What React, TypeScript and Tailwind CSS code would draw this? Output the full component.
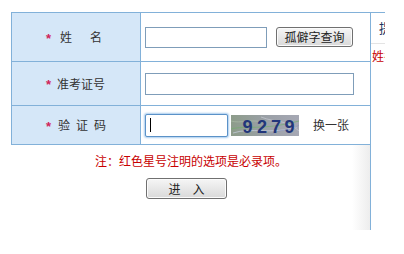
import React from 'react';

const FONT = "font-['SimSun','Noto_Sans_CJK_SC','Liberation_Sans',sans-serif]";

function Star() {
  return (
    <span className="w-[6px] text-[13px] leading-none font-bold text-[#d0245a] font-['Liberation_Sans',sans-serif] translate-y-[1px]">
      *
    </span>
  );
}

function Captcha() {
  return (
    <svg width="68" height="21" viewBox="0 0 68 21" className="block">
      <defs>
        <linearGradient id="cg" x1="0" y1="0" x2="1" y2="0">
          <stop offset="0" stopColor="#8d9c8a" />
          <stop offset="0.5" stopColor="#9aa0a6" />
          <stop offset="1" stopColor="#a6a8b4" />
        </linearGradient>
      </defs>
      <rect width="68" height="21" fill="url(#cg)" />
      <path d="M0 14 C 15 10, 30 16, 68 6" stroke="#6fae6a" strokeWidth="0.8" fill="none" opacity="0.8" />
      <path d="M2 18 C 20 12, 40 20, 66 12" stroke="#c8d0e0" strokeWidth="0.8" fill="none" opacity="0.9" />
      <path d="M30 2 C 45 8, 55 4, 68 16" stroke="#d0d4dc" strokeWidth="0.7" fill="none" opacity="0.8" />
      <path d="M0 6 C 10 9, 20 3, 34 8" stroke="#b8c8b0" strokeWidth="0.6" fill="none" opacity="0.8" />
      <path d="M40 20 C 50 12, 58 18, 68 10" stroke="#8890b8" strokeWidth="0.6" fill="none" />
      <g fill="#22367a" fontFamily="Liberation Sans, Arial, sans-serif" fontWeight="bold" fontSize="18">
        <text x="11.5" y="17.5">9</text>
        <text x="26" y="17.5">2</text>
        <text x="40" y="17.5">7</text>
        <text x="53.5" y="17.5">9</text>
      </g>
    </svg>
  );
}

function Button({ children, className }: { children: React.ReactNode; className: string }) {
  return (
    <button
      type="button"
      className={`flex items-center justify-center border border-[#707070] rounded-[3px] bg-linear-to-b from-[#f6f6f6] to-[#d9d9d9] text-[12px] text-[#222] leading-none shadow-[inset_0_0_0_1px_#fbfbfb] ${className}`}
    >
      {children}
    </button>
  );
}

export default function App() {
  return (
    <div className={`w-[404px] h-[254px] bg-white text-[12px] text-[#333] ${FONT}`}>
      <div className="flex pt-[12px] pl-[11px]">
        <div className="w-[359px] flex flex-col">
          <div className="border-l border-t border-[#82b1d9]">
            {/* row 1 */}
            <div className="flex h-[49px] border-b border-[#82b1d9]">
              <div className="w-[129px] border-r border-[#82b1d9] bg-[#d5e7f8] flex items-center pl-[34px]">
                <Star />
                <span className="ml-[8px]">姓</span>
                <span className="ml-[18px]">名</span>
              </div>
              <div className="flex-1 flex items-center pl-[4px]">
                <input
                  readOnly
                  className="w-[122px] h-[21px] border border-[#7f9db9] bg-white outline-none"
                />
                <Button className="ml-[9px] w-[77px] h-[20px]">孤僻字查询</Button>
              </div>
            </div>
            {/* row 2 */}
            <div className="flex h-[44px] border-b border-[#82b1d9]">
              <div className="w-[129px] border-r border-[#82b1d9] bg-[#d5e7f8] flex items-center pl-[34px]">
                <Star />
                <span className="ml-[5px]">准考证号</span>
              </div>
              <div className="flex-1 flex items-center pl-[4px]">
                <input
                  readOnly
                  className="w-[209px] h-[22px] border border-[#7f9db9] bg-white outline-none"
                />
              </div>
            </div>
            {/* row 3 */}
            <div className="flex h-[39px] border-b border-[#82b1d9]">
              <div className="w-[129px] border-r border-[#82b1d9] bg-[#d5e7f8] flex items-center pl-[34px]">
                <Star />
                <span className="ml-[6px]">验</span>
                <span className="ml-[6px]">证</span>
                <span className="ml-[6px]">码</span>
              </div>
              <div className="flex-1 flex items-center pl-[4px]">
                <div className="relative w-[83px] h-[23px] border border-[#5b92c8] rounded-[2px] bg-white shadow-[0_0_2px_1px_#a8ccee]">
                  <span className="absolute left-[4px] top-[3px] w-px h-[14px] bg-black" />
                </div>
                <div className="ml-[3px]">
                  <Captcha />
                </div>
                <span className="ml-[14px]">换一张</span>
              </div>
            </div>
          </div>
          <div className="h-[85px] bg-linear-to-r from-white from-[95%] to-[#ededed] flex flex-col">
            <p className="mt-[8px] pl-[84px] leading-[16px] text-[#c80000] whitespace-nowrap">
              注：红色星号注明的选项是必录项。
            </p>
            <Button className="mt-[9px] ml-[135px] w-[81px] h-[21px]">进　入</Button>
          </div>
        </div>
        <div className="w-[15px] h-[218px] border-l border-t border-[#82b1d9] overflow-hidden">
          <div className="w-[200px] h-[31px] border-b border-[#e4e4e4] pl-[8px] flex items-center whitespace-nowrap text-[13px] text-[#1f3560]">
            提示
          </div>
          <div className="w-[200px] pl-[1px] pt-[3px] whitespace-nowrap text-[#c80000]">
            姓名
          </div>
        </div>
      </div>
    </div>
  );
}
